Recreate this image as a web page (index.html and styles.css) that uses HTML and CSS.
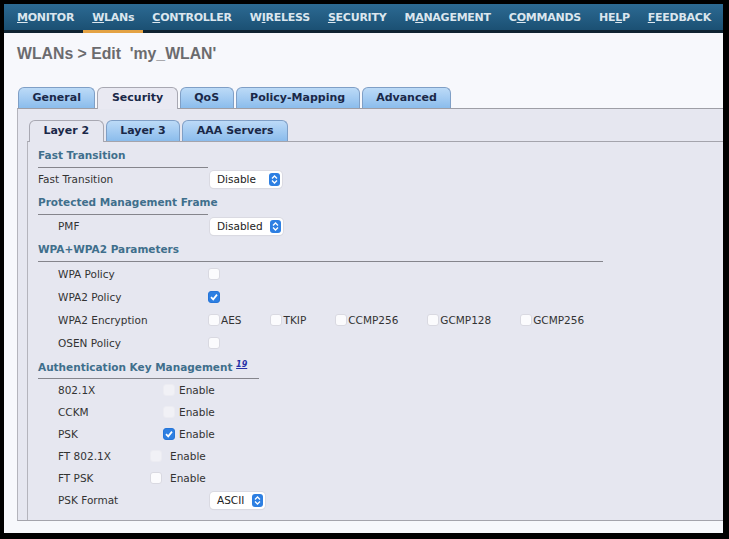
FILE: index.html
```html
<!DOCTYPE html>
<html lang="en">

<head>
    <meta charset="UTF-8">
    <meta name="viewport" content="width=device-width, initial-scale=1.0">
    <title>WLANs &gt; Edit</title>
    <link rel="stylesheet" href="styles.css">
</head>

<body>
    <div class="screen">
        <!-- Top menu -->
        <div class="nav">
            <a class="nav-item"><u>M</u>ONITOR</a>
            <a class="nav-item active"><u>W</u>LANs</a>
            <a class="nav-item"><u>C</u>ONTROLLER</a>
            <a class="nav-item">W<u>I</u>RELESS</a>
            <a class="nav-item"><u>S</u>ECURITY</a>
            <a class="nav-item">M<u>A</u>NAGEMENT</a>
            <a class="nav-item">C<u>O</u>MMANDS</a>
            <a class="nav-item">HE<u>L</u>P</a>
            <a class="nav-item"><u>F</u>EEDBACK</a>
        </div>

        <h1 class="page-title">WLANs &gt; Edit &nbsp;'my_WLAN'</h1>

        <div class="tabs">
            <div class="tab">General</div>
            <div class="tab active">Security</div>
            <div class="tab">QoS</div>
            <div class="tab">Policy-Mapping</div>
            <div class="tab">Advanced</div>
        </div>

        <div class="panel">
            <div class="tabs sub-tabs">
                <div class="tab active">Layer 2</div>
                <div class="tab">Layer 3</div>
                <div class="tab">AAA Servers</div>
            </div>

            <div class="sub-panel">
                <div class="section-title short">Fast Transition</div>
                <div class="row">
                    <span class="label flat">Fast Transition</span>
                    <span class="select w-disable">Disable <span class="stepper"><svg width="7" height="9" viewBox="0 0 7 9"><path d="M1 3.5 L3.5 1 L6 3.5 M1 5.5 L3.5 8 L6 5.5" fill="none" stroke="#fff" stroke-width="1.3"/></svg></span></span>
                </div>

                <div class="section-title short">Protected Management Frame</div>
                <div class="row">
                    <span class="label">PMF</span>
                    <span class="select w-disabled">Disabled <span class="stepper"><svg width="7" height="9" viewBox="0 0 7 9"><path d="M1 3.5 L3.5 1 L6 3.5 M1 5.5 L3.5 8 L6 5.5" fill="none" stroke="#fff" stroke-width="1.3"/></svg></span></span>
                </div>

                <div class="section-title wide">WPA+WPA2 Parameters</div>
                <div class="row tall">
                    <span class="label">WPA Policy</span>
                    <span class="check"></span>
                </div>
                <div class="row tall">
                    <span class="label">WPA2 Policy</span>
                    <span class="check on"><svg width="10" height="10" viewBox="0 0 10 10"><path d="M2 5.2 L4.2 7.4 L8 2.6" fill="none" stroke="#fff" stroke-width="1.7"/></svg></span>
                </div>
                <div class="row tall">
                    <span class="label">WPA2 Encryption</span>
                    <div class="options">
                        <span class="option"><span class="check"></span>AES</span>
                        <span class="option"><span class="check"></span>TKIP</span>
                        <span class="option"><span class="check"></span>CCMP256</span>
                        <span class="option"><span class="check"></span>GCMP128</span>
                        <span class="option"><span class="check"></span>GCMP256</span>
                    </div>
                </div>
                <div class="row tall">
                    <span class="label">OSEN Policy</span>
                    <span class="check"></span>
                </div>

                <div class="section-title akm">Authentication Key Management <a class="note">19</a></div>
                <div class="row">
                    <span class="label akm-label">802.1X</span>
                    <span class="check faint"></span><span class="enable">Enable</span>
                </div>
                <div class="row">
                    <span class="label akm-label">CCKM</span>
                    <span class="check faint"></span><span class="enable">Enable</span>
                </div>
                <div class="row">
                    <span class="label akm-label">PSK</span>
                    <span class="check on"><svg width="10" height="10" viewBox="0 0 10 10"><path d="M2 5.2 L4.2 7.4 L8 2.6" fill="none" stroke="#fff" stroke-width="1.7"/></svg></span><span class="enable">Enable</span>
                </div>
                <div class="row">
                    <span class="label ft-label">FT 802.1X</span>
                    <span class="check faint"></span><span class="enable far">Enable</span>
                </div>
                <div class="row">
                    <span class="label ft-label">FT PSK</span>
                    <span class="check"></span><span class="enable far">Enable</span>
                </div>
                <div class="row">
                    <span class="label">PSK Format</span>
                    <span class="select w-ascii">ASCII <span class="stepper"><svg width="7" height="9" viewBox="0 0 7 9"><path d="M1 3.5 L3.5 1 L6 3.5 M1 5.5 L3.5 8 L6 5.5" fill="none" stroke="#fff" stroke-width="1.3"/></svg></span></span>
                </div>
            </div>
        </div>
    </div>
</body>

</html>
```

FILE: styles.css
```css
body {
    margin: 0;
    background-color: #000;
    font-family: "DejaVu Sans", Verdana, sans-serif;
}

.screen {
    margin: 4px 6px 6px 4px;
    height: 529px;
    background-color: #f7f8fc;
    overflow: hidden;
}

/* top menu */
.nav {
    display: flex;
    height: 29px;
    padding-left: 4px;
    background: linear-gradient(to bottom, #2c6a93 0, #1b5073 26px, #0f2331 26px, #0f2331 29px);
}

.nav-item {
    display: flex;
    align-items: center;
    box-sizing: border-box;
    height: 29px;
    padding: 0 9px;
    border-bottom: 3px solid transparent;
    color: #dbe6ee;
    font-size: 11px;
    font-weight: bold;
    letter-spacing: -0.25px;
    text-decoration: none;
    white-space: nowrap;
}

.nav-item.active {
    border-bottom-color: #e3a244;
}

.page-title {
    margin: 12px 0 0;
    padding-left: 13px;
    height: 18px;
    line-height: 18px;
    font-family: "Liberation Sans", Arial, sans-serif;
    font-size: 15.8px;
    font-weight: bold;
    color: #6b6b6e;
}

/* tabs */
.tabs {
    display: flex;
    align-items: flex-end;
    gap: 2px;
    margin-top: 24px;
    padding-left: 14px;
    height: 21px;
}

.tab {
    box-sizing: border-box;
    height: 21px;
    padding: 0 13.5px;
    line-height: 20px;
    border: 1px solid #7f9fc6;
    border-bottom: none;
    border-radius: 6px 6px 0 0;
    background: linear-gradient(to bottom, #bcdaf7, #8bbcec);
    color: #1a2848;
    font-size: 11px;
    font-weight: bold;
}

.tab.active {
    height: 22px;
    margin-bottom: -1px;
    position: relative;
    border-color: #a8a8b2;
    background: #e9e9f2;
}

.panel {
    margin-left: 13px;
    padding: 11px 0 0 9px;
    border-top: 1px solid #9e9ea6;
    border-left: 1px solid #b4b4bc;
    border-bottom: 1px solid #a4a4ac;
    background-color: #e6e7f0;
}

.sub-tabs {
    margin-top: 0;
    padding-left: 2px;
    gap: 2px;
}

.sub-tabs .tab {
    padding: 0 13.5px;
}

.sub-tabs .tab.active {
    background: #e6e7f0;
}

.sub-panel {
    padding: 1px 0 9px 10px;
    border-top: 1px solid #a4a4ac;
    border-left: 1px solid #b4b4bc;
    color: #333;
    font-size: 10.5px;
}

.section-title {
    box-sizing: border-box;
    height: 25px;
    line-height: 24px;
    border-bottom: 1px solid #85858c;
    color: #3f6f8c;
    font-size: 10.5px;
    font-weight: bold;
    white-space: nowrap;
}

.section-title.short {
    width: 170px;
}

.section-title.wide {
    width: 565px;
}

.section-title.akm {
    width: 221px;
    line-height: 21px;
}

.note {
    color: #2530a8;
    font-size: 8px;
    font-style: italic;
    text-decoration: underline;
    vertical-align: 4px;
}

.row {
    display: flex;
    align-items: center;
    height: 22px;
}

.row.tall {
    height: 23px;
}

.label {
    box-sizing: border-box;
    flex: none;
    width: 170px;
    padding-left: 20px;
}

.label.flat {
    padding-left: 0;
}

.label.akm-label {
    width: 125px;
}

.label.ft-label {
    width: 112px;
}

/* checkboxes */
.check {
    box-sizing: border-box;
    display: inline-flex;
    align-items: center;
    justify-content: center;
    flex: none;
    width: 12px;
    height: 12px;
    border: 1px solid #d9d9e1;
    border-radius: 3px;
    background-color: #fbfbfd;
}

.check.faint {
    border-color: #ececf2;
    background-color: #f1f1f6;
}

.check.on {
    border-color: #2675d8;
    background-color: #2d7fe2;
}

.enable {
    margin-left: 4px;
}

.enable.far {
    margin-left: 8px;
}

.options {
    display: flex;
    gap: 29px;
}

.option {
    display: flex;
    align-items: center;
    gap: 1px;
}

/* pop-up menus */
.select {
    box-sizing: border-box;
    display: inline-flex;
    align-items: center;
    justify-content: space-between;
    margin-left: 2px;
    height: 17px;
    padding: 0 2px 0 7px;
    border-radius: 4px;
    background-color: #fff;
    box-shadow: 0 0 0 1px #dadae2, 0 1px 1px rgba(0, 0, 0, 0.08);
    color: #222;
    font-size: 10.5px;
}

.w-disable {
    width: 72px;
}

.w-disabled {
    width: 73px;
}

.w-ascii {
    width: 55px;
}

.stepper {
    display: inline-flex;
    align-items: center;
    justify-content: center;
    width: 11px;
    height: 13px;
    border-radius: 3px;
    background-color: #2d7fe2;
}
```
